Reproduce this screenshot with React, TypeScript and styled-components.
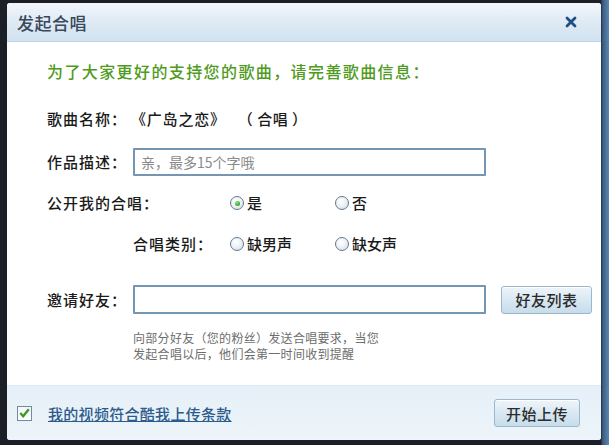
import React from 'react';
import styled, { createGlobalStyle } from 'styled-components';

const GlobalStyle = createGlobalStyle`
  html, body {
    margin: 0;
    padding: 0;
    width: 609px;
    height: 445px;
    overflow: hidden;
    background: #1b2027;
  }
  body {
    font-family: "Noto Sans CJK SC", "Noto Sans", sans-serif;
  }
`;

const Screen = styled.div`
  display: flex;
  width: 609px;
  height: 445px;
  padding: 3px 0 5px 7px;
  box-sizing: border-box;
  background: linear-gradient(90deg, #1b2027 0%, #1b2027 98.6%, #3a5f86 99%, #5f86ad 100%);
`;

const Dialog = styled.div`
  display: flex;
  flex-direction: column;
  width: 594px;
  height: 437px;
  border-radius: 3px;
  overflow: hidden;
  background: #ffffff;
`;

const TitleBar = styled.div`
  display: flex;
  align-items: center;
  justify-content: space-between;
  height: 39px;
  padding: 0 24px 0 10px;
  background: linear-gradient(180deg, #f1f6fb 0%, #dde9f4 55%, #d1e2f0 100%);
  border-bottom: 1px solid #bfd3e4;
  box-sizing: border-box;
`;

const Title = styled.div`
  font-size: 17px;
  font-weight: 500;
  color: #39485a;
  letter-spacing: 0.5px;
`;

const CloseIcon = styled.svg`
  width: 12px;
  height: 12px;
  display: block;
`;

const Body = styled.div`
  flex: 1;
  display: flex;
  flex-direction: column;
  padding: 19px 0 0 40px;
`;

const Notice = styled.div`
  font-size: 16px;
  line-height: 20px;
  font-weight: 500;
  color: #4e9b20;
  letter-spacing: 1.4px;
`;

const Row = styled.div<{ $top: number; $indent?: number }>`
  display: flex;
  align-items: center;
  margin-top: ${(p) => p.$top}px;
  padding-left: ${(p) => p.$indent ?? 0}px;
  font-size: 15px;
  font-weight: 500;
  color: #1a1a1a;
`;

const Label = styled.div<{ $width: number }>`
  width: ${(p) => p.$width}px;
  flex-shrink: 0;
  line-height: 20px;
  letter-spacing: 1px;
`;

const SongTitle = styled.span`
  line-height: 20px;
  letter-spacing: 0.8px;
`;

const Chorus = styled.span`
  margin-left: 12px;
  line-height: 20px;
  letter-spacing: 0.5px;
`;

const TextInput = styled.input<{ $height: number }>`
  width: 353px;
  height: ${(p) => p.$height}px;
  box-sizing: border-box;
  border: 2px solid #7495b4;
  border-radius: 1px;
  padding: 0 6px;
  font-family: inherit;
  font-size: 14px;
  color: #333;
  outline: none;
  &::placeholder {
    color: #8a8a8a;
  }
`;

const RadioGroup = styled.div`
  display: flex;
`;

const RadioOption = styled.label`
  display: flex;
  align-items: center;
  width: 105px;
  line-height: 20px;
  font-size: 15px;
  color: #1a1a1a;
`;

const RadioDot = styled.span<{ $checked?: boolean }>`
  position: relative;
  width: 14px;
  height: 14px;
  margin-right: 3px;
  border-radius: 50%;
  border: 1px solid #5f7a93;
  box-sizing: border-box;
  background: radial-gradient(circle at 40% 35%, #ffffff 0%, #eef2f5 45%, #cfd8df 100%);
  &::after {
    content: '';
    display: ${(p) => (p.$checked ? 'block' : 'none')};
    position: absolute;
    left: 3.5px;
    top: 3.5px;
    width: 5px;
    height: 5px;
    border-radius: 50%;
    background: radial-gradient(circle at 40% 35%, #9be27a 0%, #3fae2c 60%, #2a8a1e 100%);
  }
`;

const ListButton = styled.button<{ $width: number; $height: number }>`
  width: ${(p) => p.$width}px;
  height: ${(p) => p.$height}px;
  border: 1px solid #9cb8cd;
  border-radius: 3px;
  background: linear-gradient(180deg, #eef5fa 0%, #d9e8f3 50%, #c7dcea 100%);
  box-shadow: inset 0 1px 0 #ffffff;
  font-family: inherit;
  font-size: 15px;
  font-weight: 500;
  color: #2c2c2c;
  letter-spacing: 0.5px;
  padding: 0;
  cursor: pointer;
`;

const InviteButton = styled(ListButton)`
  margin-left: 15px;
`;

const Hint = styled.div`
  margin-top: 16px;
  padding-left: 86px;
  font-size: 12px;
  line-height: 16px;
  letter-spacing: 0.3px;
  color: #6d6d6d;
`;

const Footer = styled.div`
  display: flex;
  align-items: center;
  justify-content: space-between;
  height: 55px;
  padding: 0 21px 0 10px;
  box-sizing: border-box;
  background: linear-gradient(180deg, #e6f0f8 0%, #edf4fa 100%);
  border-top: 1px solid #dde9f3;
`;

const Agree = styled.label`
  display: flex;
  align-items: center;
  gap: 16px;
`;

const CheckBox = styled.span`
  display: flex;
  align-items: center;
  justify-content: center;
  width: 15px;
  height: 15px;
  border: 1px solid #6e8ba5;
  box-sizing: border-box;
  background: linear-gradient(180deg, #f4f6f8, #ffffff);
`;

const TermsLink = styled.a`
  font-size: 15px;
  font-weight: 500;
  color: #2d5c8c;
  text-decoration: underline;
  letter-spacing: 0.3px;
  cursor: pointer;
`;

export default function App() {
  return (
    <>
      <GlobalStyle />
      <Screen>
        <Dialog>
          <TitleBar>
            <Title>发起合唱</Title>
            <CloseIcon viewBox="0 0 12 12">
              <path d="M2 2 L10 10 M10 2 L2 10" stroke="#1d4f86" strokeWidth="2.8" strokeLinecap="round" />
            </CloseIcon>
          </TitleBar>
          <Body>
            <Notice>为了大家更好的支持您的歌曲，请完善歌曲信息：</Notice>
            <Row $top={28}>
              <Label $width={84}>歌曲名称：</Label>
              <SongTitle>《广岛之恋》</SongTitle>
              <Chorus>（ 合唱 ）</Chorus>
            </Row>
            <Row $top={19}>
              <Label $width={86}>作品描述：</Label>
              <TextInput $height={28} placeholder="亲，最多15个字哦" />
            </Row>
            <Row $top={17}>
              <Label $width={183}>公开我的合唱：</Label>
              <RadioGroup>
                <RadioOption>
                  <RadioDot $checked />是
                </RadioOption>
                <RadioOption>
                  <RadioDot />否
                </RadioOption>
              </RadioGroup>
            </Row>
            <Row $top={21} $indent={86}>
              <Label $width={97}>合唱类别：</Label>
              <RadioGroup>
                <RadioOption>
                  <RadioDot />缺男声
                </RadioOption>
                <RadioOption>
                  <RadioDot />缺女声
                </RadioOption>
              </RadioGroup>
            </Row>
            <Row $top={31}>
              <Label $width={86}>邀请好友：</Label>
              <TextInput $height={29} />
              <InviteButton $width={91} $height={28}>好友列表</InviteButton>
            </Row>
            <Hint>
              向部分好友（您的粉丝）发送合唱要求，当您
              <br />
              发起合唱以后，他们会第一时间收到提醒
            </Hint>
          </Body>
          <Footer>
            <Agree>
              <CheckBox>
                <svg width="11" height="10" viewBox="0 0 11 10">
                  <path d="M1.3 5 L4.2 8.2 L9.8 1.3" fill="none" stroke="#3a9a22" strokeWidth="2.4" />
                </svg>
              </CheckBox>
              <TermsLink>我的视频符合酷我上传条款</TermsLink>
            </Agree>
            <ListButton $width={86} $height={28}>开始上传</ListButton>
          </Footer>
        </Dialog>
      </Screen>
    </>
  );
}
